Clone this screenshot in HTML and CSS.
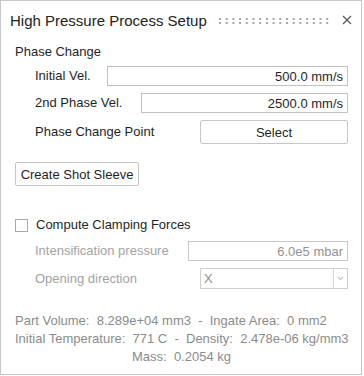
FILE: index.html
```html
<!DOCTYPE html>
<html lang="en">
<head>
    <meta charset="UTF-8">
    <meta name="viewport" content="width=device-width, initial-scale=1.0">
    <title>High Pressure Process Setup</title>
    <link rel="stylesheet" href="styles.css">
</head>
<body>

    <div class="panel">
        <!-- title bar -->
        <div class="titlebar">
            <span class="title">High Pressure Process Setup</span>
            <svg class="grip" width="112" height="6" viewBox="0 0 112 6">
                <defs>
                    <pattern id="dots" width="6.7" height="4" patternUnits="userSpaceOnUse">
                        <rect x="0" y="0" width="2" height="2" fill="#a6a6a6"></rect>
                    </pattern>
                </defs>
                <rect x="0" y="0" width="112" height="6" fill="url(#dots)"></rect>
            </svg>
            <svg class="close" width="10" height="10" viewBox="0 0 10 10">
                <path d="M1 1 L9 9 M9 1 L1 9" stroke="#555" stroke-width="1.2" fill="none"></path>
            </svg>
        </div>

        <div class="content">
            <div class="heading">Phase Change</div>

            <div class="row first">
                <span class="label">Initial Vel.</span>
                <input class="field w241" type="text" value="500.0 mm/s">
            </div>
            <div class="row">
                <span class="label">2nd Phase Vel.</span>
                <input class="field w207" type="text" value="2500.0 mm/s">
            </div>
            <div class="row">
                <span class="label">Phase Change Point</span>
                <button class="btn w148" type="button">Select</button>
            </div>

            <button class="btn sleeve" type="button">Create Shot Sleeve</button>

            <label class="check-row">
                <span class="box"></span>
                <span>Compute Clamping Forces</span>
            </label>

            <div class="row disabled first-dis">
                <span class="label">Intensification pressure</span>
                <input class="field w160" type="text" value="6.0e5 mbar" disabled>
            </div>
            <div class="row disabled">
                <span class="label">Opening direction</span>
                <div class="combo w148">
                    <span class="combo-text">X</span>
                    <span class="combo-arrow">
                        <svg width="7" height="5" viewBox="0 0 7 5">
                            <path d="M1 1 L3.5 3.5 L6 1" stroke="#c4c4c4" stroke-width="1.2" fill="none"></path>
                        </svg>
                    </span>
                </div>
            </div>

            <div class="info">
                <div>Part Volume:&nbsp; 8.289e+04 mm3&nbsp; -&nbsp; Ingate Area:&nbsp; 0 mm2</div>
                <div>Initial Temperature:&nbsp; 771 C&nbsp; -&nbsp; Density:&nbsp; 2.478e-06 kg/mm3</div>
                <div class="center">Mass:&nbsp; 0.2054 kg</div>
            </div>
        </div>
    </div>

</body>
</html>
```

FILE: styles.css
```css
body {
    font-family: "Liberation Sans", Arial, sans-serif;
    font-size: 13px;
    color: #1f1f1f;
    background-color: #fff;
    margin: 0;
    padding: 0;
}

.panel {
    box-sizing: border-box;
    width: 362px;
    height: 375px;
    border: 1px solid #c6c6c6;
    background-color: #fff;
}

/* title bar */
.titlebar {
    height: 38px;
    display: flex;
    align-items: center;
    padding: 0 0 0 9px;
}

.title {
    font-size: 15px;
    color: #222;
}

.grip {
    margin-left: 12px;
    margin-top: 1px;
}

.close {
    margin-left: 11px;
}

.content {
    padding: 0 13px 0 14px;
}

.heading {
    line-height: 16px;
    margin-top: 5px;
}

.row {
    display: flex;
    align-items: center;
    justify-content: space-between;
    padding-left: 20px;
    margin-top: 7px;
}

.row.first {
    margin-top: 6px;
}

.label {
    line-height: 16px;
}

.field {
    box-sizing: border-box;
    height: 20px;
    border: 1px solid #c2c2c2;
    padding: 0 4px;
    font-family: inherit;
    font-size: 13px;
    color: #1f1f1f;
    text-align: right;
    background-color: #fff;
    outline: none;
}

.w241 { width: 241px; }
.w207 { width: 207px; }
.w160 { width: 160px; }
.w148 { width: 148px; }

.btn {
    box-sizing: border-box;
    height: 24px;
    border: 1px solid #c6c6c6;
    border-radius: 2px;
    background-color: #fff;
    font-family: inherit;
    font-size: 13px;
    color: #1f1f1f;
    padding: 0;
}

.sleeve {
    display: block;
    width: 124px;
    margin-top: 18px;
}

/* checkbox */
.check-row {
    display: flex;
    align-items: center;
    margin-top: 31px;
    line-height: 16px;
}

.check-row .box {
    box-sizing: border-box;
    width: 13px;
    height: 13px;
    border: 1px solid #a9a9a9;
    background-color: #fff;
    margin-right: 8px;
}

/* disabled rows */
.row.disabled .label {
    color: #a3a3a3;
}

.row.first-dis {
    margin-top: 8px;
}

.field:disabled {
    color: #939393;
    border-color: #c8c8c8;
}

.combo {
    box-sizing: border-box;
    height: 21px;
    border: 1px solid #cfcfcf;
    display: flex;
    align-items: center;
}

.combo-text {
    flex: 1;
    padding-left: 3px;
    color: #8f8f8f;
}

.combo-arrow {
    width: 13px;
    height: 19px;
    border-left: 1px solid #d6d6d6;
    display: flex;
    align-items: center;
    justify-content: center;
}

/* summary text */
.info {
    margin-top: 23px;
    color: #8b8b8b;
    line-height: 18px;
    white-space: nowrap;
}

.info .center {
    text-align: center;
}
```
